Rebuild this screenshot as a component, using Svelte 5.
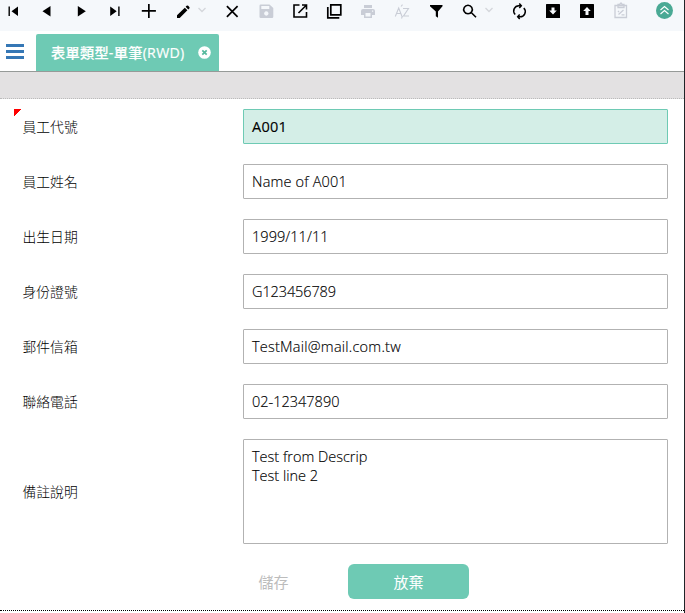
<script>
  const tools = [
    { name: 'first', d: 'M7.500 6.500h1.400v9.500H7.500z M17 6.500v9.500L10.500 11.200z' },
    { name: 'previous', d: 'M15.500 6v10.500L7.500 11.200z' },
    { name: 'next', d: 'M8.800 6v10.500l8-5.200z' },
    { name: 'last', d: 'M7.200 6.500v9.500l6.500-4.700z M15.200 6.500h1.400v9.500h-1.400z' },
    { name: 'add', d: 'M11 4h1.700v6h6.200v1.800h-6.200V18H11v-6.200H4.800V10H11z' },
    { name: 'edit', d: 'M6 15.200L13.800 7.700l2.600 2.600L8.700 18H6z M14.600 6.800l1-1q.8-.7 1.600 0L18.300 6.900q.7.8 0 1.500l-1 1z', chevron: true },
    { name: 'close', line: 'M6.900 6.200l10.700 10.700M17.600 6.200L6.900 16.900', w: 1.700 },
    { name: 'save', off: true, d: 'M6.700 4.500h8.800L19.300 8v8.800q0 1.200-1.200 1.200H6.700q-1.200 0-1.200-1.200V5.700q0-1.200 1.200-1.200z M7.300 6v3h8V6z M12.300 11.300a2.200 2.200 0 1 0 .01 0z' },
    { name: 'open', line: 'M11.500 5H6v12h12.500v-5M14 5h4.500v4.500M18.500 5l-8 8', w: 1.600 },
    { name: 'copy', line: 'M8.800 4.800h10v10h-10zM5.800 7v10.800h11.500', w: 1.700 },
    { name: 'print', off: true, d: 'M8 5h8v3H8z M7 9h10q2 0 2 2v4h-3v3H8v-3H5v-4q0-2 2-2z M9.500 13v3.500h5V13z M16 10.500v1.200h1.200v-1.200z' },
    { name: 'sort', off: true, line: 'M5.300 16.500L8.700 8 12 16.500M6.500 13.500h4.300M13 8.500h5.500L13.500 16h5.500M11 6.500l1.500-1.800M12.500 16l-1 2.500', w: 1.100 },
    { name: 'filter', d: 'M6 5h12.500v1.300L14 11.500v6.200l-2.200-1.500v-4.700L6 6.300z' },
    { name: 'search', line: 'M10 5.200a4.300 4.300 0 1 0 .01 0zM13.200 12.500l4.800 4.700', w: 1.600, chevron: true },
    { name: 'refresh', line: 'M13.500 5.700h-1.200A5.200 5.200 0 0 0 8.200 14.500M11.500 16.800h1.200A5.200 5.200 0 0 0 16.800 8M12.300 3.500l2 2.200-2 2.200M12.700 14.600l-2 2.200 2 2.200', w: 1.500 },
    { name: 'download', d: 'M5.500 4h13l.5.600V18H5V4.600z M10.500 7.500v3H8.200l3.800 4 3.800-4h-2.300v-3z' },
    { name: 'upload', d: 'M5.500 4h13l.5.600V18H5V4.600z M12 7l-3.800 4h2.300v4h3v-4h2.300z' },
    { name: 'task', off: true, line: 'M6 5.500h11.500v12H6zM9 7.500v-3h1.500L12 3l1.300 1.500H15v3zM9 11l1 1M9.500 14.500l5-4.500M12.500 14.800h3', w: 1.300 }
  ];

  const fields = [
    { label: '員工代號', value: 'A001', key: true, spacing: 0.25 },
    { label: '員工姓名', value: 'Name of A001', spacing: 0.17 },
    { label: '出生日期', value: '1999/11/11', spacing: 0.05 },
    { label: '身份證號', value: 'G123456789', spacing: -0.1 },
    { label: '郵件信箱', value: 'TestMail@mail.com.tw', spacing: 0.23 },
    { label: '聯絡電話', value: '02-12347890', spacing: 0 }
  ];
</script>

<div class="window">
  <header class="toolbar">
    {#each tools as t}
      <button class="tool" class:off={t.off} aria-label={t.name}>
        <svg width="24" height="22" viewBox="0 0 24 22">
          {#if t.d}
            <path d={t.d} fill="currentColor" fill-rule="evenodd" />
          {:else}
            <path d={t.line} fill="none" stroke="currentColor" stroke-width={t.w} />
          {/if}
        </svg>
      </button>
      {#if t.chevron}
        <span class="chevron">
          <svg width="10" height="8" viewBox="0 0 10 8"><path d="M1.500 2l3.500 3.500L8.500 2" fill="none" stroke="#d4d7db" stroke-width="1.300" /></svg>
        </span>
      {/if}
    {/each}
    <button class="collapse" aria-label="collapse">
      <svg width="17" height="17" viewBox="0 0 17 17"><path d="M4.500 8l4-3.500 4 3.500M4.500 12l4-3.500 4 3.500" fill="none" stroke="#fff" stroke-width="1.100" /></svg>
    </button>
  </header>

  <nav class="tabs">
    <button class="menu" aria-label="menu"><i></i><i></i><i></i></button>
    <div class="tab">
      <span class="title">表單類型-單筆(RWD)</span>
      <svg width="13" height="13" viewBox="0 0 13 13">
        <circle cx="6.500" cy="6.500" r="6.300" fill="#fff" />
        <path d="M4.300 4.300l4.400 4.400M8.700 4.300L4.300 8.700" stroke="#55b99d" stroke-width="1.700" />
      </svg>
    </div>
  </nav>
  <div class="strip"></div>

  <main>
    {#each fields as f}
      <div class="row" class:required={f.key}>
        <span class="label">{f.label}</span>
        <div class="input" class:key={f.key} style="letter-spacing: {f.spacing}px">{f.value}</div>
      </div>
    {/each}
    <div class="row memo">
      <span class="label">備註說明</span>
      <div class="input area">Test from Descrip<br />Test line 2</div>
    </div>
    <div class="actions">
      <button class="save" disabled>儲存</button>
      <button class="cancel">放棄</button>
    </div>
  </main>
</div>

<style>
  .window {
    box-sizing: border-box;
    width: 685px;
    height: 613px;
    overflow: hidden;
    background: #fff;
    border-right: 1px solid #202428;
    color: #111;
    font-family: 'Open Sans', 'Noto Sans CJK TC', sans-serif;
    font-size: 14px;
  }
  button {
    padding: 0;
    border: 0;
    background: none;
    font: inherit;
    color: inherit;
  }
  svg { display: block; }
  .toolbar {
    display: flex;
    height: 31px;
    margin-left: -4px;
    background: #f5f8fb;
  }
  .tool {
    display: flex;
    flex: 0 0 34px;
    justify-content: center;
    color: #000;
  }
  .tool.off { color: #c9cdd6; }
  .chevron {
    flex: 0 0 15px;
    padding-top: 6px;
  }
  .chevron svg { margin-left: -3px; }
  .collapse {
    width: 17px;
    height: 17px;
    margin: 2px 11px 0 auto;
    border-radius: 50%;
    background: #49a994;
  }
  .tabs {
    display: flex;
    height: 40px;
    border-bottom: 1px solid #969a98;
  }
  .menu {
    display: flex;
    flex-direction: column;
    gap: 3.500px;
    width: 18px;
    margin: 13px 12px 0 6px;
  }
  .menu i {
    height: 2.500px;
    background: #3577b5;
  }
  .tab {
    display: flex;
    align-items: center;
    justify-content: space-between;
    box-sizing: border-box;
    width: 183px;
    height: 37px;
    margin-top: 3px;
    padding: 0 8px 0 15px;
    border-radius: 2px 2px 0 0;
    background: #6ecab4;
    color: #fff;
  }
  .title {
    padding-bottom: 2px;
    white-space: nowrap;
    font-size: 14.200px;
    font-weight: 500;
    letter-spacing: 0.28px;
    -webkit-text-stroke: 0.2px #fff;
  }
  .strip {
    height: 26px;
    background: #e3e1e2;
    border-bottom: 1px dotted #bbb;
  }
  main {
    padding: 10px 16px 11px 14px;
    border-bottom: 1px dotted #000;
  }
  .row {
    display: flex;
    align-items: center;
    height: 35px;
    margin-bottom: 20px;
  }
  .required {
    background: linear-gradient(135deg, #f00 5px, transparent 5px) 0 0 / 7px 7px no-repeat;
  }
  .label {
    width: 220.500px;
    padding: 0 0 2px 8.500px;
    color: #000;
    font-family: 'Noto Sans CJK TC', sans-serif;
    font-size: 13.800px;
    font-weight: 300;
  }
  .input {
    box-sizing: border-box;
    flex: 0 0 425px;
    height: 35px;
    padding: 0 8px;
    border: 1px solid #b2b2b2;
    border-radius: 1px;
    color: #000;
    font-size: 14.500px;
    font-weight: 300;
    line-height: 33px;
    -webkit-text-stroke: 0.150px #000;
  }
  .key {
    border-color: #6ecab4;
    background: #d4eee7;
    font-weight: 400;
  }
  .memo { height: 105px; }
  .area {
    height: 105px;
    padding-top: 7px;
    line-height: 19px;
  }
  .actions {
    display: flex;
    margin-left: 199px;
  }
  .actions button {
    width: 121px;
    height: 35px;
    border-radius: 6px;
    font-size: 15px;
  }
  .actions .save { color: #bcbcbc; }
  .actions .cancel {
    margin-left: 14px;
    background: #6ecab4;
    color: #fff;
  }
</style>
